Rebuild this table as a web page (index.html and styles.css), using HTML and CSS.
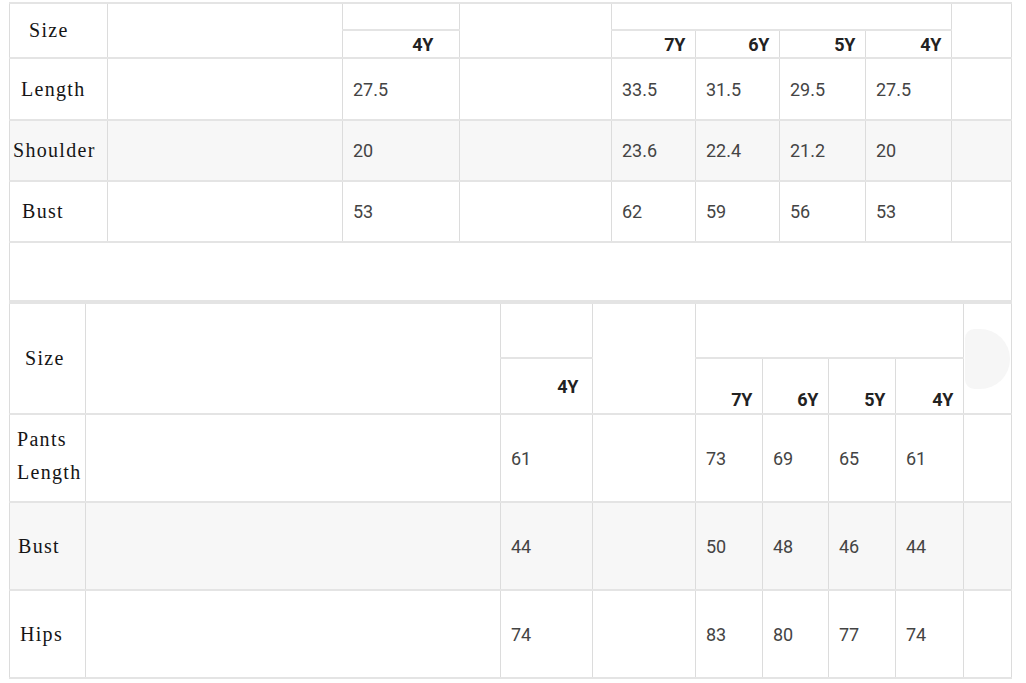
FILE: index.html
```html
<!DOCTYPE html>
<html>
<head>
<meta charset="utf-8">
<link rel="stylesheet" href="styles.css">
</head>
<body>
<main class="sheet">
  <table class="chart chart-top">
    <colgroup>
      <col class="t1"><col class="t2"><col class="t3"><col class="t4"><col class="t5"><col class="t6"><col class="t7"><col class="t8"><col class="t9">
    </colgroup>
    <tr class="h1">
      <td rowspan="2" class="label pad-20">Size</td>
      <td rowspan="2"></td>
      <td></td>
      <td rowspan="2"></td>
      <td colspan="4"></td>
      <td rowspan="2"></td>
    </tr>
    <tr class="h2">
      <th class="size pr-26">4Y</th>
      <th class="size">7Y</th>
      <th class="size">6Y</th>
      <th class="size">5Y</th>
      <th class="size">4Y</th>
    </tr>
    <tr class="row r62">
      <td class="label pad-11">Length</td><td></td>
      <td class="num">27.5</td><td></td>
      <td class="num">33.5</td><td class="num">31.5</td><td class="num">29.5</td><td class="num">27.5</td><td></td>
    </tr>
    <tr class="row r61 alt">
      <td class="label pad-3">Shoulder</td><td></td>
      <td class="num">20</td><td></td>
      <td class="num">23.6</td><td class="num">22.4</td><td class="num">21.2</td><td class="num">20</td><td></td>
    </tr>
    <tr class="row r61">
      <td class="label pad-12">Bust</td><td></td>
      <td class="num">53</td><td></td>
      <td class="num">62</td><td class="num">59</td><td class="num">56</td><td class="num">53</td><td></td>
    </tr>
    <tr class="band">
      <td colspan="9"></td>
    </tr>
  </table>

  <table class="chart chart-bottom">
    <colgroup>
      <col class="b1"><col class="b2"><col class="b3"><col class="b4"><col class="b5"><col class="b6"><col class="b7"><col class="b8"><col class="b9">
    </colgroup>
    <tr class="bh1">
      <td rowspan="2" class="label pad-15">Size</td>
      <td rowspan="2"></td>
      <td></td>
      <td rowspan="2"></td>
      <td colspan="4"></td>
      <td rowspan="2" class="blob-cell"><span class="blob"></span></td>
    </tr>
    <tr class="bh2">
      <th class="size pr-14">4Y</th>
      <th class="size low">7Y</th>
      <th class="size low">6Y</th>
      <th class="size low">5Y</th>
      <th class="size low">4Y</th>
    </tr>
    <tr class="row r88">
      <td class="label pad-7 two">Pants<br>Length</td><td></td>
      <td class="num">61</td><td></td>
      <td class="num">73</td><td class="num">69</td><td class="num">65</td><td class="num">61</td><td></td>
    </tr>
    <tr class="row r88 alt">
      <td class="label pad-8">Bust</td><td></td>
      <td class="num">44</td><td></td>
      <td class="num">50</td><td class="num">48</td><td class="num">46</td><td class="num">44</td><td></td>
    </tr>
    <tr class="row r88">
      <td class="label pad-10">Hips</td><td></td>
      <td class="num">74</td><td></td>
      <td class="num">83</td><td class="num">80</td><td class="num">77</td><td class="num">74</td><td></td>
    </tr>
  </table>
</main>
</body>
</html>
```

FILE: styles.css
```css
html, body {
  margin: 0;
  padding: 0;
  background: #ffffff;
}

.sheet {
  padding: 2px 0 0 9px;
  width: 1002px;
}

.chart {
  border-collapse: collapse;
  table-layout: fixed;
  width: 1002px;
  background: #ffffff;
}

.chart td,
.chart th {
  padding: 0;
  border-left: 1px solid #dcdcdc;
  border-right: 1px solid #dcdcdc;
  border-top: 2px solid #e4e4e4;
  border-bottom: 2px solid #e4e4e4;
  vertical-align: middle;
}

/* top table columns */
.t1 { width: 98px; }
.t2 { width: 235px; }
.t3 { width: 117px; }
.t4 { width: 152px; }
.t5 { width: 84px; }
.t6 { width: 84px; }
.t7 { width: 86px; }
.t8 { width: 86px; }
.t9 { width: 60px; }

/* bottom table columns */
.b1 { width: 76px; }
.b2 { width: 415px; }
.b3 { width: 92px; }
.b4 { width: 103px; }
.b5 { width: 67px; }
.b6 { width: 66px; }
.b7 { width: 67px; }
.b8 { width: 68px; }
.b9 { width: 48px; }

.h1 td { height: 25px; }
.h2 th { height: 26px; }
.r62 td { height: 60px; }
.r61 td { height: 59px; }
.band td { height: 57px; }

.bh1 td { height: 53px; }
.bh2 th { height: 51px; }
.r88 td { height: 86px; }

.alt td { background: #f7f7f7; }

.label {
  font-family: "Liberation Serif", "Times New Roman", serif;
  font-size: 20px;
  letter-spacing: 1.3px;
  color: #151515;
  white-space: nowrap;
}

.r88 td.two {
  height: 81px;
  line-height: 33px;
  padding-bottom: 5px;
}

.pad-3 { padding-left: 3px !important; }
.pad-7 { padding-left: 7px !important; }
.pad-8 { padding-left: 8px !important; }
.pad-10 { padding-left: 10px !important; }
.pad-11 { padding-left: 11px !important; }
.pad-12 { padding-left: 12px !important; }
.pad-15 { padding-left: 15px !important; }
.pad-20 { padding-left: 19px !important; }

.num {
  font-family: Roboto, "Liberation Sans", sans-serif;
  font-size: 18px;
  color: #444444;
  padding-left: 10px !important;
}

.size {
  font-family: Roboto, "Liberation Sans", sans-serif;
  font-weight: 700;
  font-size: 18px;
  letter-spacing: -0.3px;
  color: #222222;
  text-align: right;
  padding-right: 10px !important;
}

.size.low {
  vertical-align: bottom;
  padding-bottom: 3px !important;
}

.pr-26 { padding-right: 26px !important; }
.pr-14 { padding-right: 14px !important; }

.blob-cell { position: relative; }

.blob {
  position: absolute;
  left: 1px;
  top: 25px;
  width: 45px;
  height: 60px;
  background: #f6f6f6;
  border-radius: 10px 32px 32px 10px;
}
```
